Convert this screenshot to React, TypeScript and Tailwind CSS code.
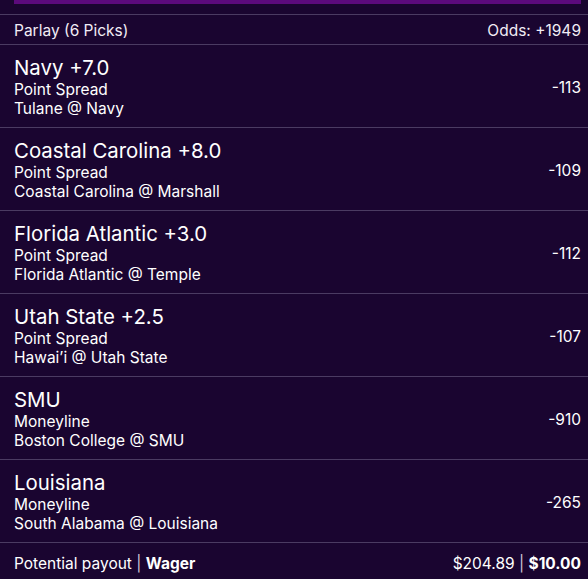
const PICKS = [
  { title: "Navy +7.0", market: "Point Spread", game: "Tulane @ Navy", odds: "-113" },
  { title: "Coastal Carolina +8.0", market: "Point Spread", game: "Coastal Carolina @ Marshall", odds: "-109" },
  { title: "Florida Atlantic +3.0", market: "Point Spread", game: "Florida Atlantic @ Temple", odds: "-112" },
  { title: "Utah State +2.5", market: "Point Spread", game: "Hawai\u2019i @ Utah State", odds: "-107" },
  { title: "SMU", market: "Moneyline", game: "Boston College @ SMU", odds: "-910" },
  { title: "Louisiana", market: "Moneyline", game: "South Alabama @ Louisiana", odds: "-265" },
];

export default function App() {
  return (
    <div
      className="w-[588px] h-[579px] overflow-hidden bg-[#1a0530] text-white"
      style={{ fontFamily: 'Inter, "Noto Sans", sans-serif' }}
    >
      <div className="ml-[14px] mr-[7px] h-[4px] bg-[#5c0a7c]" />
      <div className="mt-[10px] border-t border-[#4b3b62]">
        {/* Header */}
        <div className="flex items-center justify-between pl-[14px] pr-[7px] pt-[3px] h-[29px] text-[15.5px] text-[#f1ecf5]">
          <span>Parlay (6 Picks)</span>
          <span>Odds: +1949</span>
        </div>

        {PICKS.map((p) => (
          <div
            key={p.title}
            className="flex items-center justify-between border-t border-[#4b3b62] pl-[14px] pr-[7px] h-[83px]"
          >
            <div className="flex flex-col">
              <span className="text-[20.4px] leading-[25px]">{p.title}</span>
              <span className="text-[15.5px] leading-[19px]">{p.market}</span>
              <span className="text-[15.5px] leading-[19px]">{p.game}</span>
            </div>
            <span className="text-[15.5px] pt-[3px]">{p.odds}</span>
          </div>
        ))}

        {/* Footer */}
        <div className="flex items-center justify-between border-t border-[#4b3b62] pl-[14px] pr-[7px] pt-[5px] h-[37px] text-[15.5px]">
          <span>
            Potential payout <span className="text-[#cfc6d8]">|</span> <b className="font-bold">Wager</b>
          </span>
          <span>
            $204.89 <span className="text-[#cfc6d8]">|</span> <b className="font-bold">$10.00</b>
          </span>
        </div>
      </div>
    </div>
  );
}
